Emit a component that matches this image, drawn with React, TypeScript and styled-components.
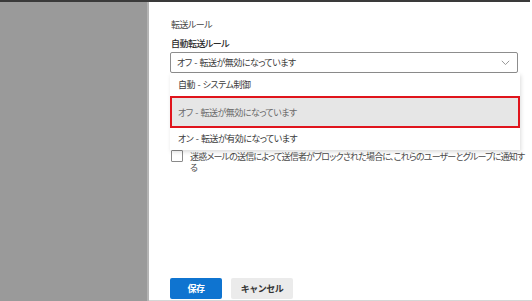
import React from "react";
import styled, { createGlobalStyle } from "styled-components";

const Global = createGlobalStyle`
  html, body { margin: 0; padding: 0; background: #ffffff; }
  body {
    font-family: "Noto Sans CJK JP", "Noto Sans", sans-serif;
    font-feature-settings: "palt";
    letter-spacing: -0.5px;
    word-spacing: 1px;
    -webkit-font-smoothing: antialiased;
  }
`;

const Frame = styled.div`
  width: 530px;
  height: 301px;
  box-sizing: border-box;
  display: flex;
  border-top: 2px solid #3a3a3a;
`;

const Shade = styled.div`
  width: 147px;
  flex: none;
  background: #9a9a9a;
  border-right: 2px solid #b4b4b4;
`;

const Panel = styled.main`
  flex: 1;
  display: flex;
  flex-direction: column;
  box-sizing: border-box;
  padding: 16px 10px 1px 21px;
  border-right: 1px solid #cfcfcf;
  border-bottom: 1px solid #d6d6d6;
`;

const Title = styled.div`
  font-size: 9px;
  line-height: 14px;
  color: #454545;
  padding-left: 1px;
`;

const Label = styled.div`
  margin-top: 5px;
  font-size: 9px;
  line-height: 14px;
  font-weight: 500;
  color: #2a2a2a;
  padding-left: 1px;
`;

const SelectWrap = styled.div`
  position: relative;
  width: 348px;
  margin-top: 1px;
`;

const Select = styled.div`
  height: 21px;
  box-sizing: border-box;
  border: 1px solid #8d8d8d;
  border-radius: 2px;
  display: flex;
  align-items: center;
  justify-content: space-between;
  padding: 0 7px 0 6px;
  font-size: 9px;
  color: #3a3a3a;
`;

const Menu = styled.ul`
  position: absolute;
  top: 100%;
  left: 0;
  width: 350px;
  margin: 0;
  padding: 0 0 2px;
  list-style: none;
  background: #fff;
  box-shadow: 1px 2px 4px rgba(0, 0, 0, 0.14);
`;

const Item = styled.li<{ $h: number; $selected?: boolean }>`
  height: ${(p) => p.$h}px;
  box-sizing: border-box;
  display: flex;
  align-items: center;
  padding-left: ${(p) => (p.$selected ? 6 : 8)}px;
  font-size: 9px;
  color: ${(p) => (p.$selected ? "#6a6a6a" : "#3a3a3a")};
  background: ${(p) => (p.$selected ? "#e6e6e6" : "transparent")};
  border: ${(p) => (p.$selected ? "2px solid #e0141c" : "none")};
`;

const CheckRow = styled.label`
  margin-top: 77px;
  display: flex;
  align-items: flex-start;
  gap: 7px;
  padding-left: 1px;
`;

const Box = styled.span`
  width: 12px;
  height: 12px;
  flex: none;
  box-sizing: border-box;
  border: 1px solid #8a8a8a;
  border-radius: 1px;
  background: #fff;
`;

const CheckText = styled.span`
  width: 338px;
  flex: none;
  font-size: 9px;
  line-height: 11px;
  letter-spacing: -0.8px;
  color: #4a4a4a;
  margin-top: 1px;
`;

const Actions = styled.div`
  margin-top: auto;
  display: flex;
  gap: 9px;
`;

const Button = styled.button<{ $primary?: boolean }>`
  height: 21px;
  width: ${(p) => (p.$primary ? 52 : 62)}px;
  border: none;
  border-radius: 2px;
  font-family: inherit;
  letter-spacing: inherit;
  font-size: 9px;
  font-weight: 600;
  padding: 0;
  color: ${(p) => (p.$primary ? "#ffffff" : "#333333")};
  background: ${(p) => (p.$primary ? "#0f74d0" : "#ebebeb")};
`;

const Chevron = () => (
  <svg width="9" height="6" viewBox="0 0 9 6" fill="none">
    <path d="M0.8 0.8 L4.5 4.6 L8.2 0.8" stroke="#999999" strokeWidth="1" />
  </svg>
);

export default function App() {
  return (
    <>
      <Global />
      <Frame>
        <Shade />
        <Panel>
          <Title>転送ルール</Title>
          <Label>自動転送ルール</Label>
          <SelectWrap>
            <Select>
              <span>オフ - 転送が無効になっています</span>
              <Chevron />
            </Select>
            <Menu>
              <Item $h={23}>自動 - システム制御</Item>
              <Item $h={32} $selected>
                オフ - 転送が無効になっています
              </Item>
              <Item $h={20}>オン - 転送が有効になっています</Item>
            </Menu>
          </SelectWrap>
          <CheckRow>
            <Box />
            <CheckText>
              迷惑メールの送信によって送信者がブロックされた場合に、これらのユーザーとグループに通知する
            </CheckText>
          </CheckRow>
          <Actions>
            <Button $primary>保存</Button>
            <Button>キャンセル</Button>
          </Actions>
        </Panel>
      </Frame>
    </>
  );
}
